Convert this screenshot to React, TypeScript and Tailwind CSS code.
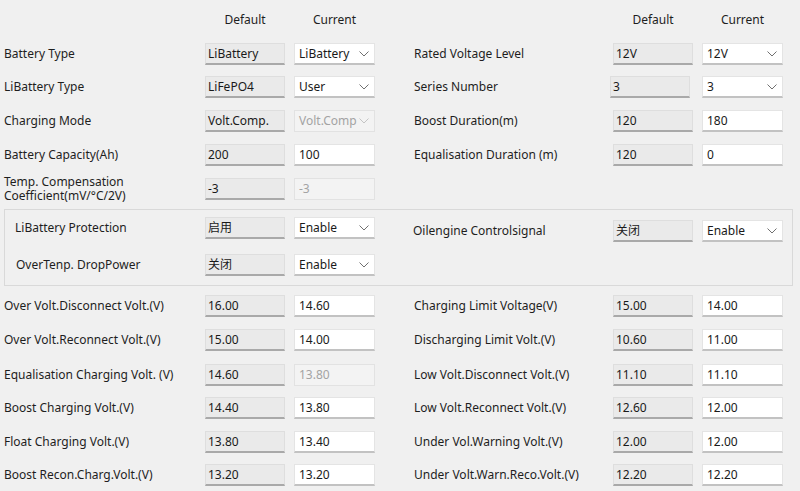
import React from "react";

const FONT = { fontFamily: '"Noto Sans", "Noto Sans CJK SC", sans-serif' };

function Chevron({ disabled }: { disabled?: boolean }) {
  return (
    <svg width="10" height="6" viewBox="0 0 10 6" className="shrink-0">
      <polyline
        points="0.5,0.5 5,5 9.5,0.5"
        fill="none"
        stroke={disabled ? "#c4c4c4" : "#707070"}
        strokeWidth="1"
      />
    </svg>
  );
}

function DefBox({ v }: { v: string }) {
  return (
    <div className="w-[80px] h-[22px] shrink-0 bg-[#eaeaea] border border-[#dedede] border-b-2 border-b-[#a9a9a9] flex items-center pl-[2px] text-[12px] text-[#1a1a1a] leading-none">
      {v}
    </div>
  );
}

function CurBox({ v, kind }: { v: string; kind: "text" | "select" | "dtext" | "dselect" }) {
  const disabled = kind === "dtext" || kind === "dselect";
  const isSelect = kind === "select" || kind === "dselect";
  return (
    <div
      className={
        disabled
          ? "w-[81px] h-[22px] shrink-0 bg-[#f3f3f3] border border-[#e2e2e2] flex items-center pl-[4px] pr-[5px] text-[12px] text-[#a3a3a3] leading-none"
          : "w-[81px] h-[22px] shrink-0 bg-white border border-[#e4e4e4] border-b-2 border-b-[#c2c2c2] flex items-center pl-[4px] pr-[5px] text-[12px] text-[#1a1a1a] leading-none"
      }
    >
      <span className="flex-1">{v}</span>
      {isSelect && <Chevron disabled={disabled} />}
    </div>
  );
}

type Cell = {
  label: string;
  def: string;
  cur: string;
  kind: "text" | "select" | "dtext" | "dselect";
  shift?: number;
};

function Half({ c, labelW, gap = 9 }: { c?: Cell; labelW: number; gap?: number }) {
  if (!c) return <div className="shrink-0" style={{ width: labelW + 80 + gap + 81 }} />;
  const s = c.shift ?? 0;
  return (
    <div className="flex items-center shrink-0">
      <div
        className="shrink-0 text-[12px] text-[#1e1e1e] leading-[14px] whitespace-pre-line"
        style={{ width: labelW - s }}
      >
        {c.label}
      </div>
      <DefBox v={c.def} />
      <div className="shrink-0" style={{ width: gap + s }} />
      <CurBox v={c.cur} kind={c.kind} />
    </div>
  );
}

function Row({ l, r, mt }: { l?: Cell; r?: Cell; mt: number }) {
  return (
    <div className="flex items-center h-[22px] pl-[4px]" style={{ marginTop: mt }}>
      <Half c={l} labelW={201} />
      <div className="w-[39px] shrink-0" />
      <Half c={r} labelW={199} />
    </div>
  );
}

const top: [Cell | undefined, Cell | undefined, number][] = [
  [
    { label: "Battery Type", def: "LiBattery", cur: "LiBattery", kind: "select" },
    { label: "Rated Voltage Level", def: "12V", cur: "12V", kind: "select" },
    12,
  ],
  [
    { label: "LiBattery Type", def: "LiFePO4", cur: "User", kind: "select" },
    { label: "Series Number", def: "3", cur: "3", kind: "select", shift: 3 },
    11,
  ],
  [
    { label: "Charging Mode", def: "Volt.Comp.", cur: "Volt.Comp", kind: "dselect" },
    { label: "Boost Duration(m)", def: "120", cur: "180", kind: "text" },
    12,
  ],
  [
    { label: "Battery Capacity(Ah)", def: "200", cur: "100", kind: "text" },
    { label: "Equalisation Duration (m)", def: "120", cur: "0", kind: "text" },
    12,
  ],
  [
    { label: "Temp. Compensation\nCoefficient(mV/°C/2V)", def: "-3", cur: "-3", kind: "dtext" },
    undefined,
    12,
  ],
];

const bottom: [Cell, Cell, number][] = [
  [
    { label: "Over Volt.Disconnect Volt.(V)", def: "16.00", cur: "14.60", kind: "text" },
    { label: "Charging Limit Voltage(V)", def: "15.00", cur: "14.00", kind: "text" },
    9,
  ],
  [
    { label: "Over Volt.Reconnect Volt.(V)", def: "15.00", cur: "14.00", kind: "text" },
    { label: "Discharging Limit Volt.(V)", def: "10.60", cur: "11.00", kind: "text" },
    12,
  ],
  [
    { label: "Equalisation Charging Volt. (V)", def: "14.60", cur: "13.80", kind: "dtext" },
    { label: "Low Volt.Disconnect Volt.(V)", def: "11.10", cur: "11.10", kind: "text" },
    13,
  ],
  [
    { label: "Boost Charging Volt.(V)", def: "14.40", cur: "13.80", kind: "text" },
    { label: "Low Volt.Reconnect Volt.(V)", def: "12.60", cur: "12.00", kind: "text" },
    11,
  ],
  [
    { label: "Float Charging Volt.(V)", def: "13.80", cur: "13.40", kind: "text" },
    { label: "Under Vol.Warning Volt.(V)", def: "12.00", cur: "12.00", kind: "text" },
    12,
  ],
  [
    { label: "Boost Recon.Charg.Volt.(V)", def: "13.20", cur: "13.20", kind: "text" },
    { label: "Under Volt.Warn.Reco.Volt.(V)", def: "12.20", cur: "12.20", kind: "text" },
    11,
  ],
];

function Header() {
  return (
    <div className="flex items-center h-[22px] mt-[9px] pl-[4px] text-[12px] text-[#1e1e1e]">
      <div className="w-[201px] shrink-0" />
      <div className="w-[80px] text-center shrink-0">Default</div>
      <div className="w-[9px] shrink-0" />
      <div className="w-[81px] text-center shrink-0">Current</div>
      <div className="w-[39px] shrink-0" />
      <div className="w-[199px] shrink-0" />
      <div className="w-[80px] text-center shrink-0">Default</div>
      <div className="w-[9px] shrink-0" />
      <div className="w-[81px] text-center shrink-0">Current</div>
    </div>
  );
}

export default function App() {
  return (
    <div className="w-[800px] h-[491px] bg-[#f0f0f0] overflow-hidden" style={FONT}>
      <Header />
      {top.map(([l, r, mt], i) => (
        <Row key={i} l={l} r={r} mt={mt} />
      ))}
      <div className="ml-[4px] mt-[9px] w-[789px] h-[77px] border border-[#d9d9d9] flex">
        <div className="flex flex-col pl-[10px] pt-[7px] shrink-0">
          <Half c={{ label: "LiBattery Protection", def: "启用", cur: "Enable", kind: "select" }} labelW={190} />
          <div className="h-[15px]" />
          <div className="pl-[1px]">
            <Half c={{ label: "OverTenp. DropPower", def: "关闭", cur: "Enable", kind: "select" }} labelW={189} />
          </div>
        </div>
        <div className="w-[38px] shrink-0" />
        <div className="pt-[10px] shrink-0">
          <Half c={{ label: "Oilengine Controlsignal", def: "关闭", cur: "Enable", kind: "select" }} labelW={200} />
        </div>
      </div>
      {bottom.map(([l, r, mt], i) => (
        <Row key={i} l={l} r={r} mt={mt} />
      ))}
    </div>
  );
}
